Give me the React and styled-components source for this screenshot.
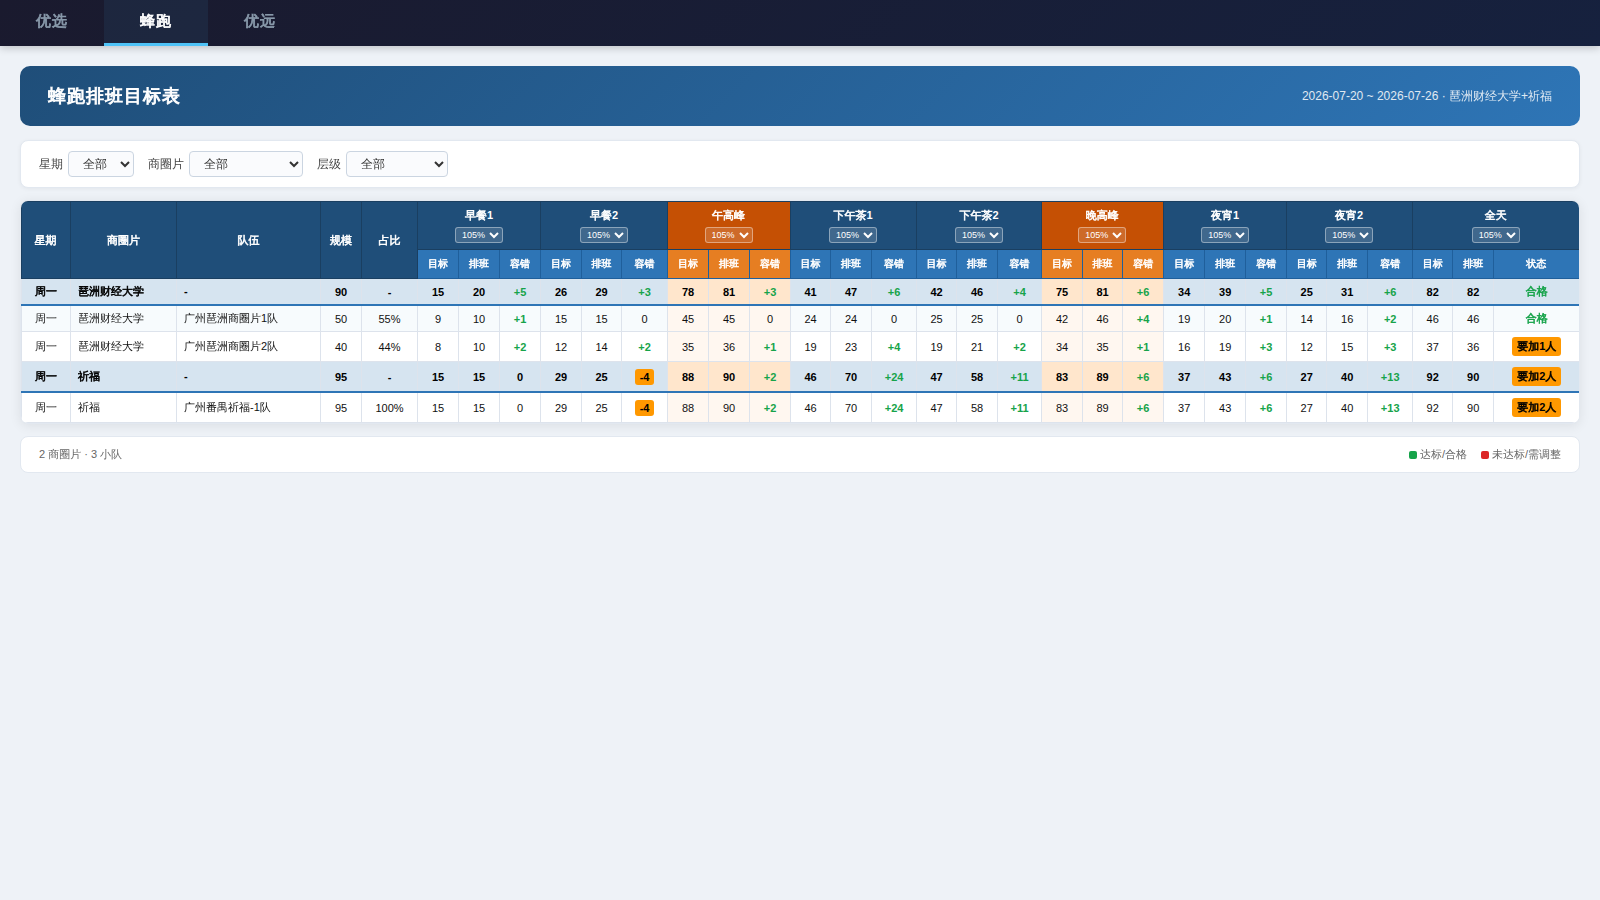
import { useState } from "react"
import styled, { createGlobalStyle, css } from "styled-components"


const tabs = ["优选", "蜂跑", "优远"]

const colWidths = [
    49, 106, 144, 41, 56,
    41, 41, 41, 41, 40, 46, 41, 41, 41,
    40, 41, 45, 40, 41, 44, 41, 40, 41,
    41, 41, 41, 40, 41, 45, 40, 41, 86
]

const filters = [
    { label: "星期", width: 66 },
    { label: "商圈片", width: 114 },
    { label: "层级", width: 102 }
]

const periods = [
    { name: "早餐1" },
    { name: "早餐2" },
    { name: "午高峰", peak: true, trim: true },
    { name: "下午茶1", trim: true },
    { name: "下午茶2" },
    { name: "晚高峰", peak: true, trim: true },
    { name: "夜宵1" },
    { name: "夜宵2", trim: true }
]

// values: [目标, 排班] por período
const rows = [
    {
        day: "周一", area: "琶洲财经大学", team: "-", size: 90, share: "-", total: true, height: 26,
        values: [[15, 20], [26, 29], [78, 81], [41, 47], [42, 46], [75, 81], [34, 39], [25, 31]],
        allDay: [82, 82], status: "合格"
    },
    {
        day: "周一", area: "琶洲财经大学", team: "广州琶洲商圈片1队", size: 50, share: "55%", striped: true, height: 27,
        values: [[9, 10], [15, 15], [45, 45], [24, 24], [25, 25], [42, 46], [19, 20], [14, 16]],
        allDay: [46, 46], status: "合格"
    },
    {
        day: "周一", area: "琶洲财经大学", team: "广州琶洲商圈片2队", size: 40, share: "44%", height: 30,
        values: [[8, 10], [12, 14], [35, 36], [19, 23], [19, 21], [34, 35], [16, 19], [12, 15]],
        allDay: [37, 36], status: "要加1人"
    },
    {
        day: "周一", area: "祈福", team: "-", size: 95, share: "-", total: true, height: 30,
        values: [[15, 15], [29, 25], [88, 90], [46, 70], [47, 58], [83, 89], [37, 43], [27, 40]],
        allDay: [92, 90], status: "要加2人"
    },
    {
        day: "周一", area: "祈福", team: "广州番禺祈福-1队", size: 95, share: "100%", height: 31,
        values: [[15, 15], [29, 25], [88, 90], [46, 70], [47, 58], [83, 89], [37, 43], [27, 40]],
        allDay: [92, 90], status: "要加2人"
    }
]

// the CJK font has no bold face, so only the Chinese runs get the stroke
function Bold({ text }) {
    return text.split(/([\u4e00-\u9fff]+)/).filter(Boolean).map((part, i) =>
        /[\u4e00-\u9fff]/.test(part) ? <Heavy key={i}>{part}</Heavy> : part
    )
}

function Diff({ value }) {
    if (value < 0) return <Badge>{value}</Badge>
    if (value > 0) return <Good>+{value}</Good>
    return 0
}

function RateSelect() {
    return (
        <SmallSelect defaultValue="105%">
            <option>100%</option>
            <option>105%</option>
            <option>110%</option>
        </SmallSelect>
    )
}

function Row({ row }) {
    return (
        <BodyRow $total={row.total} $striped={row.striped} $height={row.height}>
            <Cell>{row.total ? <Bold text={row.day} /> : row.day}</Cell>
            <Cell $left>{row.total ? <Bold text={row.area} /> : row.area}</Cell>
            <Cell $left>{row.team}</Cell>
            <Cell $num>{row.size}</Cell>
            <Cell $num>{row.share}</Cell>
            {row.values.map(([goal, planned], i) => {
                const peak = periods[i].peak
                return [
                    <Cell key={`g${i}`} $num $peak={peak} $total={row.total}>{goal}</Cell>,
                    <Cell key={`p${i}`} $num $peak={peak} $total={row.total}>{planned}</Cell>,
                    <Cell key={`d${i}`} $num $peak={peak} $total={row.total}><Diff value={planned - goal} /></Cell>
                ]
            })}
            <Cell $num>{row.allDay[0]}</Cell>
            <Cell $num>{row.allDay[1]}</Cell>
            <Cell>
                {row.status === "合格"
                    ? <Good><Bold text={row.status} /></Good>
                    : <Badge><Bold text={row.status} /></Badge>}
            </Cell>
        </BodyRow>
    )
}

export default function App() {

    const [tab, setTab] = useState("蜂跑")

    return (
        <>
            <GlobalStyle />
            <NavBar>
                {tabs.map(t => (
                    <Tab key={t} $active={t === tab} onClick={() => setTab(t)}>{t}</Tab>
                ))}
            </NavBar>

            <PageContainer>
                <Banner>
                    <h1>蜂跑排班目标表</h1>
                    <span>2026-07-20 ~ 2026-07-26 · 琶洲财经大学+祈福</span>
                </Banner>

                <FilterContainer>
                    {filters.map(f => (
                        <FilterItem key={f.label}>
                            {f.label}
                            <FilterSelect $width={f.width}>
                                <option>全部</option>
                            </FilterSelect>
                        </FilterItem>
                    ))}
                </FilterContainer>

                <TableContainer>
                    <Table>
                        <colgroup>
                            {colWidths.map((w, i) => <Col key={i} $width={w} />)}
                        </colgroup>
                        <thead>
                            <GroupRow>
                                <HeadCell rowSpan={2} $trim><Heavy>星期</Heavy></HeadCell>
                                <HeadCell rowSpan={2}><Heavy>商圈片</Heavy></HeadCell>
                                <HeadCell rowSpan={2}><Heavy>队伍</Heavy></HeadCell>
                                <HeadCell rowSpan={2}><Heavy>规模</Heavy></HeadCell>
                                <HeadCell rowSpan={2}><Heavy>占比</Heavy></HeadCell>
                                {periods.map(p => (
                                    <HeadCell key={p.name} colSpan={3} $peak={p.peak} $trim={p.trim}>
                                        <GroupTitle><Bold text={p.name} /></GroupTitle>
                                        <RateSelect />
                                    </HeadCell>
                                ))}
                                <HeadCell colSpan={3} $trim>
                                    <GroupTitle><Bold text="全天" /></GroupTitle>
                                    <RateSelect />
                                </HeadCell>
                            </GroupRow>
                            <SubRow>
                                {periods.map(p => ["目标", "排班", "容错"].map(s => (
                                    <SubCell key={p.name + s} $peak={p.peak}>{s}</SubCell>
                                )))}
                                <SubCell>目标</SubCell>
                                <SubCell>排班</SubCell>
                                <SubCell $trim>状态</SubCell>
                            </SubRow>
                        </thead>
                        <tbody>
                            {rows.map((row, i) => <Row key={i} row={row} />)}
                        </tbody>
                    </Table>
                </TableContainer>

                <FooterContainer>
                    <span>2 商圈片 · 3 小队</span>
                    <Legend>
                        <LegendItem $color="#16a34a">达标/合格</LegendItem>
                        <LegendItem $color="#dc2626">未达标/需调整</LegendItem>
                    </Legend>
                </FooterContainer>
            </PageContainer>
        </>
    )
}

const GlobalStyle = createGlobalStyle`
    * {
        box-sizing: border-box;
        margin: 0;
        padding: 0;
    }
    body {
        background: #eef2f7;
        font-family: "Liberation Sans", "WenQuanYi Zen Hei", "Noto Sans CJK SC", sans-serif;
        font-size: 12px;
        color: #1a1a1a;
    }
    select {
        font-family: inherit;
    }
`
const heavy = css`
    -webkit-text-stroke: 0.05em currentColor;
`
const Heavy = styled.span`
    ${heavy}
`
const NavBar = styled.nav`
    display: flex;
    height: 46px;
    background: linear-gradient(135deg, #1a1a2e, #16213e);
    box-shadow: 0 2px 8px rgba(0, 0, 0, 0.2);
`
const Tab = styled.button`
    width: 104px;
    height: 46px;
    border: none;
    border-bottom: 3px solid ${p => p.$active ? "#4fc3f7" : "transparent"};
    background: ${p => p.$active ? "rgba(79, 195, 247, 0.08)" : "transparent"};
    color: ${p => p.$active ? "#fff" : "#8899aa"};
    font-family: inherit;
    font-size: 15px;
    font-weight: 600;
    letter-spacing: 1px;
    cursor: pointer;
    ${heavy}
`
const PageContainer = styled.main`
    padding: 20px;
`
const Banner = styled.header`
    display: flex;
    justify-content: space-between;
    align-items: center;
    height: 60px;
    padding: 0 28px;
    border-radius: 10px;
    background: linear-gradient(135deg, #1f4e79, #2e75b6);
    color: #fff;
    h1 {
        font-size: 18px;
        font-weight: 700;
        letter-spacing: 1px;
        ${heavy}
    }
    span {
        font-size: 12px;
        opacity: 0.85;
    }
`
const FilterContainer = styled.section`
    display: flex;
    align-items: center;
    gap: 14px;
    height: 48px;
    margin-top: 14px;
    padding: 0 18px;
    border: 1px solid #e2e8f0;
    border-radius: 8px;
    background: #fff;
    box-shadow: 0 1px 4px rgba(0, 0, 0, 0.05);
`
const FilterItem = styled.label`
    display: flex;
    align-items: center;
    gap: 5px;
    color: #444;
`
const FilterSelect = styled.select`
    width: ${p => p.$width}px;
    height: 26px;
    padding: 4px 10px;
    border: 1px solid #cbd5e1;
    border-radius: 4px;
    background: #fafbfd;
    color: #333;
    font-size: 12px;
`
const TableContainer = styled.section`
    margin-top: 12px;
    border: 1px solid #e2e8f0;
    border-radius: 8px;
    background: #fff;
    overflow: hidden;
    box-shadow: 0 2px 12px rgba(0, 0, 0, 0.08);
`
const Table = styled.table`
    width: 1558px;
    table-layout: fixed;
    border-collapse: collapse;
    font-size: 11px;
`
const Col = styled.col`
    width: ${p => p.$width}px;
`
const GroupRow = styled.tr`
    height: 48px;
`
const SubRow = styled.tr`
    height: 29px;
`
const HeadCell = styled.th`
    border: 1px solid #1a3f61;
    background: ${p => p.$peak ? "#c55004" : "#1f4e79"};
    color: #fff;
    font-size: 11px;
    font-weight: 700;
    vertical-align: middle;
    padding-right: ${p => p.$trim ? 1 : 0}px;
`
const GroupTitle = styled.div`
    height: 16px;
    line-height: 14px;
    margin-bottom: 3px;
`
const SmallSelect = styled.select`
    display: block;
    width: 48px;
    height: 16px;
    margin: 0 auto;
    padding: 1px 0 1px 2px;
    border: 1px solid rgba(255, 255, 255, 0.4);
    border-radius: 3px;
    background: rgba(255, 255, 255, 0.15);
    color: #fff;
    font-size: 9px;
`
const SubCell = styled.th`
    border: 1px solid #1f5f9b;
    background: ${p => p.$peak ? "#e67e22" : "#2e75b6"};
    color: #fff;
    font-size: 10px;
    font-weight: 700;
    padding-right: ${p => p.$trim ? 1 : 0}px;
    ${heavy}
`
const Cell = styled.td`
    padding: ${p => p.$left ? "0 7px" : p.$num ? "1px 0 0" : "0"};
    border: 1px solid #dde3ec;
    text-align: ${p => p.$left ? "left" : "center"};
    white-space: nowrap;
    background: ${p => p.$peak ? (p.$total ? "#ffe6cc" : "#fff7f0") : "transparent"};
`
const BodyRow = styled.tr`
    height: ${p => p.$height}px;
    background: ${p => p.$total ? "#d6e4f0" : p.$striped ? "#f7fbfd" : "#fff"};
    color: ${p => p.$total ? "#000" : "#111"};
    font-weight: ${p => p.$total ? 700 : 400};
    td {
        ${p => p.$total && "border-bottom: 2px solid #2e75b6;"}
    }
`
const Good = styled.span`
    color: #16a34a;
    font-weight: 700;
`
const Badge = styled.span`
    display: inline-block;
    padding: 2px 5px;
    border-radius: 3px;
    background: #ff9800;
    color: #000;
    font-weight: 700;
`
const FooterContainer = styled.footer`
    display: flex;
    justify-content: space-between;
    align-items: center;
    height: 37px;
    margin-top: 12px;
    padding: 0 18px;
    border: 1px solid #e2e8f0;
    border-radius: 8px;
    background: #fff;
    color: #666;
    font-size: 11px;
`
const Legend = styled.div`
    display: flex;
    gap: 14px;
`
const LegendItem = styled.span`
    display: flex;
    align-items: center;
    gap: 3px;
    &::before {
        content: "";
        width: 8px;
        height: 8px;
        border-radius: 2px;
        background: ${p => p.$color};
    }
`
